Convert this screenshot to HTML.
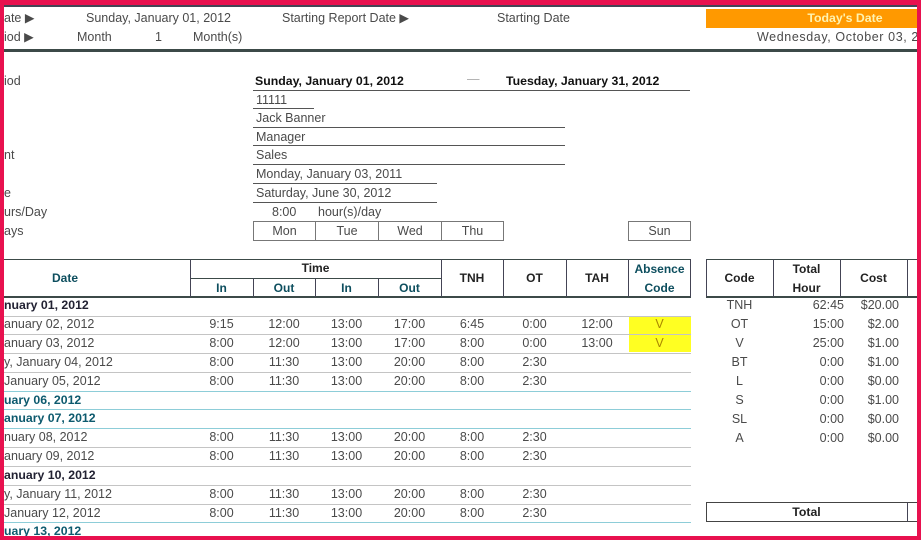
<!DOCTYPE html>
<html><head><meta charset="utf-8"><style>
*{margin:0;padding:0;box-sizing:border-box}
body{width:921px;height:540px;overflow:hidden;background:#fff;font-family:"Liberation Sans",sans-serif;font-size:12.5px;color:#4a4a4a;position:relative}
.a{position:absolute;white-space:nowrap;line-height:14px}
.c{text-align:center}
.b{font-weight:bold;font-size:12.3px}
.hl{position:absolute;height:1px;background:#555}
.vl{position:absolute;width:1px;background:#445}
.box{position:absolute;border:1px solid #777;text-align:center;line-height:18px}
.th{color:#0d4e5e;font-weight:bold;font-size:12px}
.rl{position:absolute;left:0;width:691px;height:1px;background:#c4c4c4}
.tl{background:#8dcdd8}
</style></head><body>
<div class="hl" style="left:0;top:5px;width:921px;height:2px;background:#445"></div>
<div class="hl" style="left:0;top:49px;width:921px;height:3px;background:#3c4a48"></div>
<div class="a" style="left:4px;top:11px">ate ▶</div>
<div class="a" style="left:86px;top:11px">Sunday, January 01, 2012</div>
<div class="a" style="left:282px;top:11px">Starting Report Date ▶</div>
<div class="a" style="left:497px;top:11px">Starting Date</div>
<div class="a" style="left:706px;top:9px;width:211px;height:19px;background:#ff9900"></div>
<div class="a b" style="left:790px;top:11px;width:110px;color:#fff3b0;text-align:center">Today's Date</div>
<div class="a" style="left:4px;top:30px">iod ▶</div>
<div class="a" style="left:77px;top:30px">Month</div>
<div class="a" style="left:155px;top:30px">1</div>
<div class="a" style="left:193px;top:30px">Month(s)</div>
<div class="a" style="left:757px;top:30px;letter-spacing:0.6px">Wednesday, October 03, 20</div>
<div class="a" style="left:4px;top:74px">iod</div>
<div class="a" style="left:4px;top:148px">nt</div>
<div class="a" style="left:4px;top:186px">e</div>
<div class="a" style="left:4px;top:205px">urs/Day</div>
<div class="a" style="left:4px;top:224px">ays</div>
<div class="a b" style="left:255px;top:74px;color:#111">Sunday, January 01, 2012</div>
<div class="a" style="left:467px;top:72px;color:#aaa">—</div>
<div class="a b" style="left:506px;top:74px;color:#111">Tuesday, January 31, 2012</div>
<div class="hl" style="left:253px;top:90px;width:437px"></div>
<div class="a" style="left:256px;top:93px">11111</div>
<div class="hl" style="left:253px;top:108px;width:61px"></div>
<div class="a" style="left:256px;top:111px">Jack Banner</div>
<div class="hl" style="left:253px;top:127px;width:312px"></div>
<div class="a" style="left:256px;top:130px">Manager</div>
<div class="hl" style="left:253px;top:145px;width:312px"></div>
<div class="a" style="left:256px;top:148px">Sales</div>
<div class="hl" style="left:253px;top:164px;width:312px"></div>
<div class="a" style="left:256px;top:167px">Monday, January 03, 2011</div>
<div class="hl" style="left:253px;top:183px;width:184px"></div>
<div class="a" style="left:256px;top:186px">Saturday, June 30, 2012</div>
<div class="hl" style="left:253px;top:202px;width:184px"></div>
<div class="a" style="left:272px;top:205px">8:00</div>
<div class="a" style="left:318px;top:205px">hour(s)/day</div>
<div class="box" style="left:253px;top:221px;width:63px;height:20px">Mon</div>
<div class="box" style="left:315px;top:221px;width:64px;height:20px">Tue</div>
<div class="box" style="left:378px;top:221px;width:64px;height:20px">Wed</div>
<div class="box" style="left:441px;top:221px;width:63px;height:20px">Thu</div>
<div class="box" style="left:628px;top:221px;width:63px;height:20px">Sun</div>
<div class="hl" style="left:0;top:259px;width:691px;background:#3c4a48"></div>
<div class="hl" style="left:190px;top:278px;width:251px;background:#3c4a48"></div>
<div class="hl" style="left:0;top:296px;width:691px;height:2px;background:#3c4a48"></div>
<div class="vl" style="left:190px;top:259px;height:38px"></div>
<div class="vl" style="left:253px;top:278px;height:19px"></div>
<div class="vl" style="left:315px;top:278px;height:19px"></div>
<div class="vl" style="left:378px;top:278px;height:19px"></div>
<div class="vl" style="left:441px;top:259px;height:38px"></div>
<div class="vl" style="left:503px;top:259px;height:38px"></div>
<div class="vl" style="left:566px;top:259px;height:38px"></div>
<div class="vl" style="left:628px;top:259px;height:38px"></div>
<div class="vl" style="left:690px;top:259px;height:38px"></div>
<div class="a c th" style="left:0;top:271px;width:130px">Date</div>
<div class="a c th" style="left:190px;top:261px;width:251px;color:#222">Time</div>
<div class="a c th" style="left:190px;top:281px;width:63px">In</div>
<div class="a c th" style="left:253px;top:281px;width:62px">Out</div>
<div class="a c th" style="left:315px;top:281px;width:63px">In</div>
<div class="a c th" style="left:378px;top:281px;width:63px">Out</div>
<div class="a c th" style="left:441px;top:271px;width:62px;color:#222">TNH</div>
<div class="a c th" style="left:503px;top:271px;width:63px;color:#222">OT</div>
<div class="a c th" style="left:566px;top:271px;width:62px;color:#222">TAH</div>
<div class="a c th" style="left:628px;top:262px;width:63px">Absence</div>
<div class="a c th" style="left:628px;top:281px;width:63px">Code</div>
<div class="hl" style="left:706px;top:259px;width:215px;background:#3c4a48"></div>
<div class="hl" style="left:706px;top:296px;width:215px;height:2px;background:#3c4a48"></div>
<div class="vl" style="left:706px;top:259px;height:38px"></div>
<div class="vl" style="left:773px;top:259px;height:38px"></div>
<div class="vl" style="left:840px;top:259px;height:38px"></div>
<div class="vl" style="left:907px;top:259px;height:38px"></div>
<div class="a c th" style="left:706px;top:271px;width:67px;color:#222">Code</div>
<div class="a c th" style="left:773px;top:262px;width:67px;color:#222">Total</div>
<div class="a c th" style="left:773px;top:281px;width:67px;color:#222">Hour</div>
<div class="a c th" style="left:840px;top:271px;width:67px;color:#222">Cost</div>
<div class="a" style="left:706px;top:502px;width:215px;height:20px;border:1px solid #444"></div>
<div class="vl" style="left:907px;top:502px;height:20px"></div>
<div class="a c b" style="left:706px;top:505px;width:201px;color:#222">Total</div>
<div class="a" style="left:629px;top:316px;width:62px;height:36px;background:#ffff22"></div>
<div class="rl" style="top:316px"></div>
<div class="rl" style="top:334px"></div>
<div class="rl" style="top:353px"></div>
<div class="rl" style="top:372px"></div>
<div class="rl tl" style="top:391px"></div>
<div class="rl tl" style="top:409px"></div>
<div class="rl tl" style="top:428px"></div>
<div class="rl" style="top:447px"></div>
<div class="rl" style="top:466px"></div>
<div class="rl" style="top:485px"></div>
<div class="rl" style="top:504px"></div>
<div class="rl tl" style="top:522px"></div>
<div class="a b" style="left:4px;top:298px;color:#223">nuary 01, 2012</div>
<div class="a" style="left:4px;top:317px">anuary 02, 2012</div>
<div class="a" style="left:4px;top:336px">anuary 03, 2012</div>
<div class="a" style="left:4px;top:355px">y, January 04, 2012</div>
<div class="a" style="left:4px;top:374px">January 05, 2012</div>
<div class="a b" style="left:4px;top:393px;color:#0d5a6e">uary 06, 2012</div>
<div class="a b" style="left:4px;top:411px;color:#0d5a6e">anuary 07, 2012</div>
<div class="a" style="left:4px;top:430px">nuary 08, 2012</div>
<div class="a" style="left:4px;top:449px">anuary 09, 2012</div>
<div class="a b" style="left:4px;top:468px;color:#223">anuary 10, 2012</div>
<div class="a" style="left:4px;top:487px">y, January 11, 2012</div>
<div class="a" style="left:4px;top:506px">January 12, 2012</div>
<div class="a b" style="left:4px;top:524px;color:#0d5a6e">uary 13, 2012</div>
<div style="position:absolute;left:190px;top:317px">
<div class="a c" style="left:0;width:63px">9:15</div><div class="a c" style="left:63px;width:62px">12:00</div><div class="a c" style="left:125px;width:63px">13:00</div><div class="a c" style="left:188px;width:63px">17:00</div><div class="a c" style="left:251px;width:62px">6:45</div><div class="a c" style="left:313px;width:63px">0:00</div><div class="a c" style="left:376px;width:62px">12:00</div><div class="a c" style="left:438px;width:63px;color:#a80">V</div></div>
<div style="position:absolute;left:190px;top:336px">
<div class="a c" style="left:0;width:63px">8:00</div><div class="a c" style="left:63px;width:62px">12:00</div><div class="a c" style="left:125px;width:63px">13:00</div><div class="a c" style="left:188px;width:63px">17:00</div><div class="a c" style="left:251px;width:62px">8:00</div><div class="a c" style="left:313px;width:63px">0:00</div><div class="a c" style="left:376px;width:62px">13:00</div><div class="a c" style="left:438px;width:63px;color:#a80">V</div></div>
<div style="position:absolute;left:190px;top:355px">
<div class="a c" style="left:0;width:63px">8:00</div><div class="a c" style="left:63px;width:62px">11:30</div><div class="a c" style="left:125px;width:63px">13:00</div><div class="a c" style="left:188px;width:63px">20:00</div><div class="a c" style="left:251px;width:62px">8:00</div><div class="a c" style="left:313px;width:63px">2:30</div></div>
<div style="position:absolute;left:190px;top:374px">
<div class="a c" style="left:0;width:63px">8:00</div><div class="a c" style="left:63px;width:62px">11:30</div><div class="a c" style="left:125px;width:63px">13:00</div><div class="a c" style="left:188px;width:63px">20:00</div><div class="a c" style="left:251px;width:62px">8:00</div><div class="a c" style="left:313px;width:63px">2:30</div></div>
<div style="position:absolute;left:190px;top:430px">
<div class="a c" style="left:0;width:63px">8:00</div><div class="a c" style="left:63px;width:62px">11:30</div><div class="a c" style="left:125px;width:63px">13:00</div><div class="a c" style="left:188px;width:63px">20:00</div><div class="a c" style="left:251px;width:62px">8:00</div><div class="a c" style="left:313px;width:63px">2:30</div></div>
<div style="position:absolute;left:190px;top:449px">
<div class="a c" style="left:0;width:63px">8:00</div><div class="a c" style="left:63px;width:62px">11:30</div><div class="a c" style="left:125px;width:63px">13:00</div><div class="a c" style="left:188px;width:63px">20:00</div><div class="a c" style="left:251px;width:62px">8:00</div><div class="a c" style="left:313px;width:63px">2:30</div></div>
<div style="position:absolute;left:190px;top:487px">
<div class="a c" style="left:0;width:63px">8:00</div><div class="a c" style="left:63px;width:62px">11:30</div><div class="a c" style="left:125px;width:63px">13:00</div><div class="a c" style="left:188px;width:63px">20:00</div><div class="a c" style="left:251px;width:62px">8:00</div><div class="a c" style="left:313px;width:63px">2:30</div></div>
<div style="position:absolute;left:190px;top:506px">
<div class="a c" style="left:0;width:63px">8:00</div><div class="a c" style="left:63px;width:62px">11:30</div><div class="a c" style="left:125px;width:63px">13:00</div><div class="a c" style="left:188px;width:63px">20:00</div><div class="a c" style="left:251px;width:62px">8:00</div><div class="a c" style="left:313px;width:63px">2:30</div></div>
<div style="position:absolute;left:706px;top:298px">
<div class="a c" style="left:0;top:0;width:67px">TNH</div><div class="a" style="left:80px;top:0;width:58px;text-align:right">62:45</div><div class="a" style="left:140px;top:0;width:53px;text-align:right">$20.00</div>
<div class="a c" style="left:0;top:19px;width:67px">OT</div><div class="a" style="left:80px;top:19px;width:58px;text-align:right">15:00</div><div class="a" style="left:140px;top:19px;width:53px;text-align:right">$2.00</div>
<div class="a c" style="left:0;top:38px;width:67px">V</div><div class="a" style="left:80px;top:38px;width:58px;text-align:right">25:00</div><div class="a" style="left:140px;top:38px;width:53px;text-align:right">$1.00</div>
<div class="a c" style="left:0;top:57px;width:67px">BT</div><div class="a" style="left:80px;top:57px;width:58px;text-align:right">0:00</div><div class="a" style="left:140px;top:57px;width:53px;text-align:right">$1.00</div>
<div class="a c" style="left:0;top:76px;width:67px">L</div><div class="a" style="left:80px;top:76px;width:58px;text-align:right">0:00</div><div class="a" style="left:140px;top:76px;width:53px;text-align:right">$0.00</div>
<div class="a c" style="left:0;top:95px;width:67px">S</div><div class="a" style="left:80px;top:95px;width:58px;text-align:right">0:00</div><div class="a" style="left:140px;top:95px;width:53px;text-align:right">$1.00</div>
<div class="a c" style="left:0;top:114px;width:67px">SL</div><div class="a" style="left:80px;top:114px;width:58px;text-align:right">0:00</div><div class="a" style="left:140px;top:114px;width:53px;text-align:right">$0.00</div>
<div class="a c" style="left:0;top:133px;width:67px">A</div><div class="a" style="left:80px;top:133px;width:58px;text-align:right">0:00</div><div class="a" style="left:140px;top:133px;width:53px;text-align:right">$0.00</div>
</div>
<div style="position:absolute;left:0;top:0;width:921px;height:540px;border-style:solid;border-color:#e8114f;border-width:5px 4px 4px 4px"></div>
</body></html>
